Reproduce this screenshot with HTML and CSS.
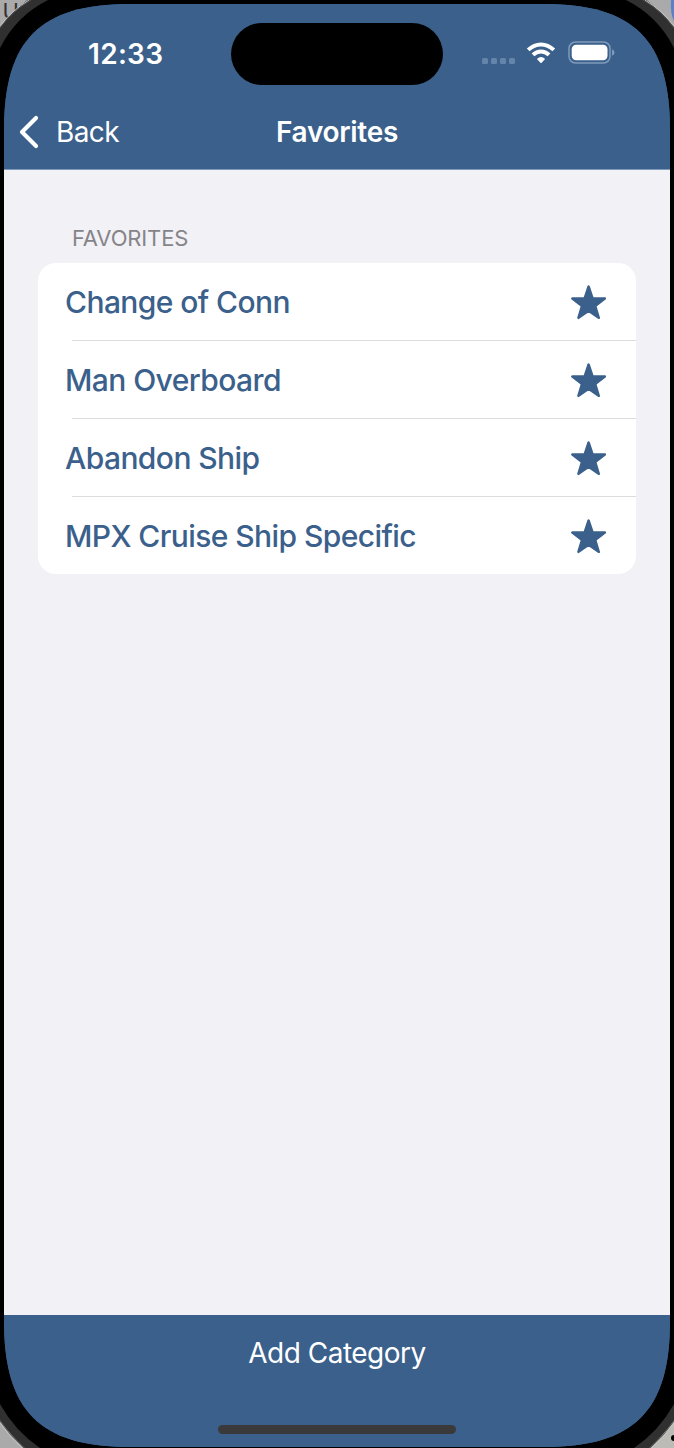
FILE: index.html
```html
<!DOCTYPE html>
<html lang="en">
<head>
<meta charset="utf-8">
<title>Favorites</title>
<link rel="stylesheet" href="styles.css">
</head>
<body>
<div class="device">
  <svg class="bezel" viewBox="0 0 674 1448" aria-hidden="true">
    <g fill="#aaa"><path d="M0 0H48L0 48z"/><path d="M626 0h48v48z"/><path d="M0 1400v48h48z"/></g>
    <path fill="#bdbbb5" d="M674 1400v48h-48z"/>
    <path fill="#5c80c8" d="M671 0h3v21q-4-8-3-21z"/>
    <text class="desk-text" x="2.500" y="19">U</text>
    <circle cx="674" cy="1438" r="3"/>
    <g fill="none" stroke-width="12" stroke="#303030">
      <path d="M-7 49Q13 13 49-7M625-7Q661 13 681 49M-8 1396Q11 1432 44 1456M630 1456Q663 1432 682 1396"/>
    </g>
    <g fill="none" stroke="#555" stroke-width="1">
      <path d="M0 28Q12 11 31 0M643 0Q662 11 674 28M0 1421Q10 1436 24 1448M650 1448Q664 1436 674 1421"/>
    </g>
    <g fill="none" stroke="#c4c4c4" stroke-width="1">
      <path d="M0 26Q11 11 29 0M645 0Q663 11 674 26M0 1423Q10 1437 22 1448M652 1448Q664 1437 674 1423"/>
    </g>
    <path d="M0 48Q16 16 48 0H626Q658 16 674 48V1404Q659 1431 634 1448H40Q15 1431 0 1404z"/>
  </svg>
  <main class="screen">
    <header class="top">
      <div class="status">
        <span class="time">12:33</span>
        <span class="island"></span>
        <span class="indicators">
          <svg class="cell" viewBox="0 0 34 6"><g fill="#6484aa"><rect width="6" height="6" rx="1.500"/><rect x="9" width="6" height="6" rx="1.500"/><rect x="18" width="6" height="6" rx="1.500"/><rect x="27" width="6" height="6" rx="1.500"/></g></svg>
          <svg class="wifi" viewBox="0 0 30 22"><g fill="none" stroke="#fff" stroke-width="4"><path d="M2.200 7.900Q8 2.400 15 2.400T27.800 7.900"/><path d="M7 12.900Q10.500 9.500 15 9.500T23 12.900"/></g><path fill="#fff" d="M10.900 16.900Q15 13.300 19.100 16.900L15.600 20.800Q15 21.400 14.400 20.800z"/></svg>
          <svg class="battery" viewBox="0 0 48 24"><rect x="1" y="1" width="41" height="21" rx="6.500" fill="none" stroke="#7f9bbb" stroke-width="1.500"/><rect x="3.700" y="3.700" width="35.800" height="15.600" rx="4.500" fill="#fff"/><path fill="#7f9bbb" d="M44 8.300q2.500 1 2.500 3.200T44 14.800z"/></svg>
        </span>
      </div>
      <nav class="nav">
        <a class="back"><svg class="chevron" viewBox="0 0 20 34"><path d="M17 3L3 17L17 31" fill="none" stroke="#fff" stroke-width="4.200" stroke-linecap="round" stroke-linejoin="round"/></svg><span>Back</span></a>
        <h1 class="title">Favorites</h1>
      </nav>
    </header>
    <section class="content">
      <h2 class="section-title">FAVORITES</h2>
      <ul class="list">
        <li class="row"><span class="label">Change of Conn</span><svg class="star" viewBox="0 0 36 36"><use href="#star"/></svg></li>
        <li class="row"><span class="label">Man Overboard</span><svg class="star" viewBox="0 0 36 36"><use href="#star"/></svg></li>
        <li class="row"><span class="label">Abandon Ship</span><svg class="star" viewBox="0 0 36 36"><use href="#star"/></svg></li>
        <li class="row"><span class="label">MPX Cruise Ship Specific</span><svg class="star" viewBox="0 0 36 36"><use href="#star"/></svg></li>
      </ul>
    </section>
    <footer class="bottom">
      <button class="add">Add Category</button>
      <span class="home"></span>
    </footer>
  </main>
</div>
<svg class="symbols" aria-hidden="true"><symbol id="star" viewBox="0 0 36 36"><path d="M18.600 1.700L22.500 13.300L34.800 13.500L25.100 21L28.700 32.800L18.600 25.800L8.500 32.800L12.100 21L2.400 13.500L14.700 13.300z" fill="#3a608b" stroke="#3a608b" stroke-width="2.600" stroke-linejoin="round"/></symbol></svg>
</body>
</html>
```
FILE: styles.css
```css
* { box-sizing: border-box; }
body { margin: 0; background: #000; font-family: Inter, "Liberation Sans", sans-serif; }
.device { position: relative; width: 674px; height: 1448px; padding: 4px 4px 1px; overflow: hidden; }
.bezel { position: absolute; left: 0; top: 0; width: 674px; height: 1448px; }
.desk-text { font: 22px Inter, sans-serif; fill: #333; }
.symbols { position: absolute; width: 0; height: 0; }
.screen {
  position: relative; display: flex; flex-direction: column; width: 666px; height: 1443px;
  background: #3a608b;
  clip-path: path("M0 126C0 36 36 0 126 0H540C630 0 666 36 666 126V1317C666 1407 630 1443 540 1443H126C36 1443 0 1407 0 1317Z");
}
.top { height: 166px; background: #3a608b; color: #fff; border-bottom: 1px solid #7f9abb; }
.status { display: grid; grid-template-columns: 227px 212px 1fr; height: 92px; padding-top: 19px; }
.time { padding-left: 84px; font-size: 28px; line-height: 62px; font-weight: 600; letter-spacing: .3px; white-space: nowrap; }
.island { height: 62px; border-radius: 31px; background: #000; }
.indicators { display: flex; padding: 18px 0 0 39px; }
.cell { width: 34px; height: 6px; margin-top: 17px; }
.wifi { width: 30px; height: 22px; margin: 1px 0 0 10px; }
.battery { width: 48px; height: 24px; margin-left: 12px; }
.nav { display: grid; grid-template-columns: 1fr auto 1fr; align-items: center; height: 72px; }
.back { display: flex; align-items: center; padding-left: 15px; font-size: 28px; gap: 17px; letter-spacing: -.6px; }
.chevron { width: 20px; height: 34px; }
.title { margin: 0; font-size: 28px; font-weight: 600; line-height: 34px; letter-spacing: -.3px; }
.content { flex: 1; padding: 55px 34px 0; background: #f2f1f6; }
.section-title { margin: 0; padding-left: 34px; height: 38px; font-size: 22px; line-height: 26px; font-weight: 400; color: #858489; letter-spacing: -.15px; }
.list { list-style: none; margin: 0; padding: 0; background: #fff; border-radius: 18px; overflow: hidden; }
.row { display: flex; align-items: center; justify-content: space-between; height: 78px; padding: 0 30px 0 27px; background: linear-gradient(#dcdcde, #dcdcde) 34px 100% / 564px 1px no-repeat; }
.row:last-child { height: 77px; background: none; }
.label { font-size: 30px; line-height: 36px; font-weight: 500; letter-spacing: -.58px; color: #3a608b; white-space: nowrap; }
.star { width: 36px; height: 36px; margin-top: 2px; }
.bottom { display: flex; flex-direction: column; align-items: center; height: 132px; background: #3a608b; padding-top: 20px; }
.add { border: 0; padding: 0; background: none; color: #fff; font: 28px/36px Inter, sans-serif; letter-spacing: -.5px; }
.home { width: 238px; height: 9px; margin-top: 54px; border-radius: 5px; background: #3a3a3a; }
```
